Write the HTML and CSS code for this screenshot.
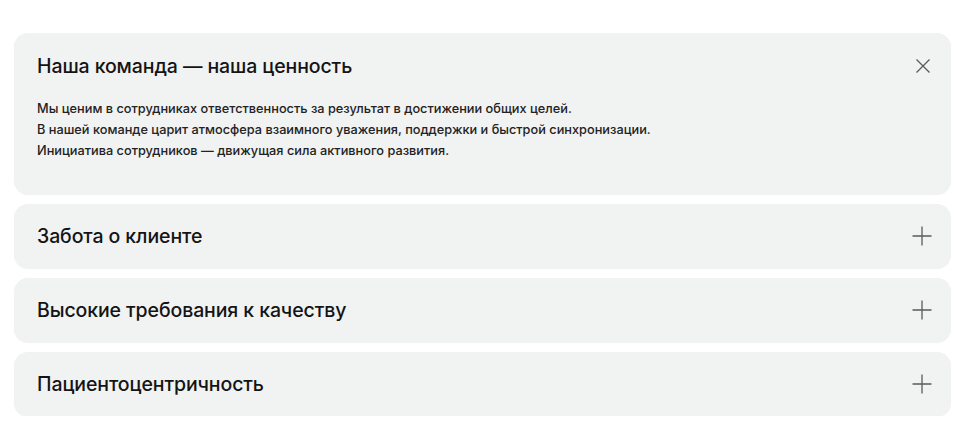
FILE: index.html
```html
<!DOCTYPE html>
<html lang="ru">
<head>
<meta charset="utf-8">
<link rel="stylesheet" href="styles.css">
</head>
<body>
<div class="accordion">
  <div class="item open">
    <div class="head">
      <span class="title">Наша команда — наша ценность</span>
      <svg class="icon" width="18" height="18" viewBox="0 0 18 18"><path d="M2.5 2.5 L15.5 15.5 M15.5 2.5 L2.5 15.5" stroke="#5a5a5a" stroke-width="1.3" fill="none"/></svg>
    </div>
    <div class="body">
      <p>Мы ценим в сотрудниках ответственность за результат в достижении общих целей.</p>
      <p>В нашей команде царит атмосфера взаимного уважения, поддержки и быстрой синхронизации.</p>
      <p>Инициатива сотрудников — движущая сила активного развития.</p>
    </div>
  </div>
  <div class="item">
    <div class="head">
      <span class="title">Забота о клиенте</span>
      <svg class="icon" width="20" height="20" viewBox="0 0 20 20"><path d="M10 0.5 V19.5 M0.5 10 H19.5" stroke="#5a5a5a" stroke-width="1.3" fill="none"/></svg>
    </div>
  </div>
  <div class="item">
    <div class="head">
      <span class="title">Высокие требования к качеству</span>
      <svg class="icon" width="20" height="20" viewBox="0 0 20 20"><path d="M10 0.5 V19.5 M0.5 10 H19.5" stroke="#5a5a5a" stroke-width="1.3" fill="none"/></svg>
    </div>
  </div>
  <div class="item">
    <div class="head">
      <span class="title">Пациентоцентричность</span>
      <svg class="icon" width="20" height="20" viewBox="0 0 20 20"><path d="M10 0.5 V19.5 M0.5 10 H19.5" stroke="#5a5a5a" stroke-width="1.3" fill="none"/></svg>
    </div>
  </div>
</div>
</body>
</html>
```

FILE: styles.css
```css
html, body {
  margin: 0;
  padding: 0;
  background: #ffffff;
}
body {
  font-family: Inter, "Noto Sans", sans-serif;
  color: #141414;
}
.accordion {
  width: 937px;
  margin: 33px 0 0 14px;
  display: flex;
  flex-direction: column;
  gap: 10px;
}
.item {
  background: #f1f2f2;
  border-radius: 14px;
  box-shadow: 0 1px 1px rgba(0,0,0,0.06);
}
.head {
  height: 65px;
  padding: 0 19px 0 23px;
  display: flex;
  align-items: center;
  justify-content: space-between;
}
.item:not(.open) .head {
  height: 64px;
}
.title {
  font-size: 19.5px;
  font-weight: 500;
  letter-spacing: -0.1px;
}
.icon {
  display: block;
}
.body {
  padding: 0 23px 33px;
}
.body p {
  margin: 0;
  font-size: 12.75px;
  font-weight: 500;
  line-height: 21px;
  color: #222;
}
```
